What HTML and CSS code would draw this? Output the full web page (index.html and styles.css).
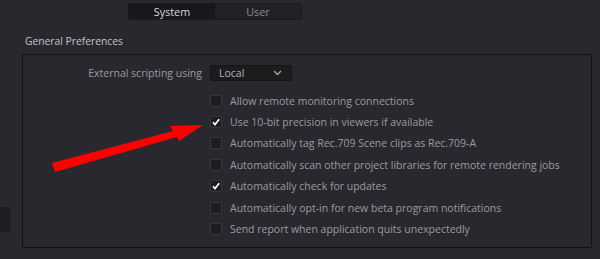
FILE: index.html
```html
<!DOCTYPE html>
<html>
<head>
<meta charset="utf-8">
<link rel="stylesheet" href="styles.css">
</head>
<body>
<div class="page">
  <div class="tabs">
    <div class="tab active">System</div>
    <div class="tab">User</div>
  </div>
  <div class="heading">General Preferences</div>
  <div class="panel">
    <div class="row-select">
      <div class="label">External scripting using</div>
      <div class="select"><span>Local</span>
        <svg class="chev" width="9" height="6" viewBox="0 0 9 6"><path d="M1 1 L4.5 4.5 L8 1" fill="none" stroke="#a8a8a8" stroke-width="1.3"/></svg>
      </div>
    </div>
    <div class="checks">
      <div class="check"><span class="box"></span><span class="txt">Allow remote monitoring connections</span></div>
      <div class="check"><span class="box on"><svg viewBox="0 0 12 12" width="12" height="12"><path d="M3 6.3 L5 8.6 L9.2 3.2" fill="none" stroke="#fff" stroke-width="1.7"/></svg></span><span class="txt">Use 10-bit precision in viewers if available</span></div>
      <div class="check"><span class="box"></span><span class="txt">Automatically tag Rec.709 Scene clips as Rec.709-A</span></div>
      <div class="check"><span class="box"></span><span class="txt">Automatically scan other project libraries for remote rendering jobs</span></div>
      <div class="check"><span class="box on"><svg viewBox="0 0 12 12" width="12" height="12"><path d="M3 6.3 L5 8.6 L9.2 3.2" fill="none" stroke="#fff" stroke-width="1.7"/></svg></span><span class="txt">Automatically check for updates</span></div>
      <div class="check"><span class="box"></span><span class="txt">Automatically opt-in for new beta program notifications</span></div>
      <div class="check"><span class="box"></span><span class="txt">Send report when application quits unexpectedly</span></div>
    </div>
  </div>
  <div class="sidebit"></div>
  <svg class="arrow" width="600" height="259" viewBox="0 0 600 259">
    <polygon fill="#ff0000" points="52,163 173,131 170,126 203,125 179,141 177,137 55,172"/>
  </svg>
</div>
</body>
</html>
```

FILE: styles.css
```css
html, body {
  margin: 0;
  padding: 0;
  background: #28282e;
}
.page {
  position: relative;
  width: 600px;
  height: 259px;
  overflow: hidden;
  font-family: "Open Sans", "Noto Sans", sans-serif;
  font-size: 10.5px;
  color: #9c9c9e;
  padding-top: 3px;
  box-sizing: border-box;
}
.tabs {
  display: flex;
  margin-left: 128px;
  width: 174px;
  height: 17px;
  border: 1px solid #1a1a1d;
  box-sizing: border-box;
  border-radius: 2px;
  overflow: hidden;
}
.tab {
  flex: 1;
  display: flex;
  align-items: center;
  justify-content: center;
  background: #222226;
  color: #8c8c90;
  font-size: 10.8px;
}
.tab.active {
  background: #18181a;
  color: #d8d8da;
}
.heading {
  margin: 13px 0 0 25px;
  height: 17px;
  line-height: 17px;
  color: #c4c4c6;
  font-size: 10.3px;
}
.panel {
  margin: 4px 0 0 22px;
  width: 570px;
  height: 194px;
  box-sizing: border-box;
  border: 1px solid #111113;
  border-radius: 2px;
  padding-top: 10px;
}
.row-select {
  display: flex;
  align-items: center;
  height: 16px;
}
.label {
  width: 179px;
  text-align: right;
  margin-right: 8px;
}
.select {
  width: 82px;
  height: 16px;
  box-sizing: border-box;
  background: #1c1c1f;
  border: 1px solid #141416;
  border-radius: 2px;
  display: flex;
  align-items: center;
  justify-content: space-between;
  padding: 0 9px 0 8px;
  color: #b4b4b6;
}
.chev { display: block; }
.checks {
  margin-top: 9px;
  padding-left: 187px;
}
.check {
  display: flex;
  align-items: center;
  height: 21.4px;
}
.box {
  width: 12px;
  height: 12px;
  box-sizing: border-box;
  background: #1d1d20;
  border: 1px solid #38383c;
  border-radius: 1px;
  margin-right: 8px;
  position: relative;
  flex: none;
}
.box svg {
  position: absolute;
  left: -1px;
  top: -1px;
}
.sidebit {
  position: absolute;
  left: 0;
  top: 207px;
  width: 10px;
  height: 25px;
  background: #1e1e21;
}
.arrow {
  position: absolute;
  left: 0;
  top: 0;
}
```
